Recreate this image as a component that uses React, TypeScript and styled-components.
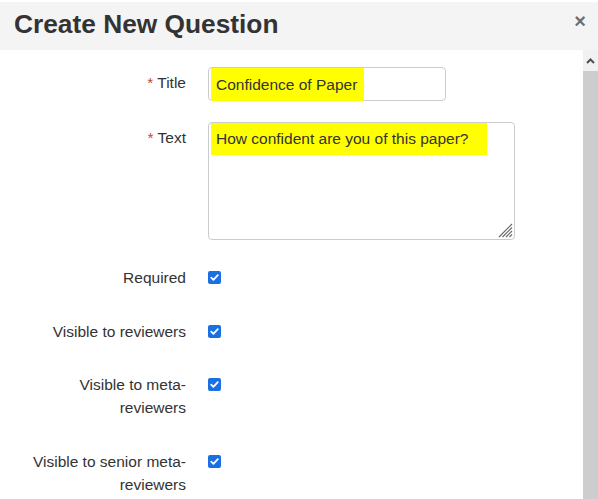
import React from "react";
import styled, { createGlobalStyle } from "styled-components";

const Global = createGlobalStyle`
  html, body { margin: 0; padding: 0; background: #ffffff; }
  body { font-family: "Liberation Sans", Arial, sans-serif; }
`;

const Page = styled.div`
  width: 598px;
  height: 499px;
  display: flex;
  flex-direction: column;
  background: #ffffff;
  padding-top: 2px;
  box-sizing: border-box;
  overflow: hidden;
`;

const Header = styled.div`
  height: 48px;
  flex: none;
  display: flex;
  align-items: center;
  justify-content: space-between;
  background: #f4f4f4;
  padding: 0 12px 0 14px;
  box-sizing: border-box;
`;

const Heading = styled.h1`
  margin: 0;
  font-family: "Liberation Sans", Arial, sans-serif;
  font-weight: bold;
  font-size: 26.3px;
  line-height: 30px;
  color: #333333;
  padding-bottom: 4px;
`;

const Close = styled.span`
  font-family: "Liberation Sans", Arial, sans-serif;
  font-weight: bold;
  font-size: 20px;
  line-height: 20px;
  color: #000;
  opacity: 0.55;
  margin-bottom: 10px;
`;

const BodyWrap = styled.div`
  flex: 1;
  display: flex;
  min-height: 0;
`;

const Content = styled.div`
  flex: 1;
  padding: 17px 0 0 21px;
  display: flex;
  flex-direction: column;
`;

const Row = styled.div<{ $mb: number }>`
  display: flex;
  align-items: flex-start;
  gap: 22px;
  margin-bottom: ${(p) => p.$mb}px;
`;

const Label = styled.div<{ $pt?: number }>`
  width: 165px;
  flex: none;
  text-align: right;
  font-size: 15.5px;
  line-height: 23px;
  color: #333333;
  padding-top: ${(p) => p.$pt ?? 0}px;
`;

const Star = styled.span`
  color: #b94a48;
  margin-right: 4px;
`;

const Field = styled.div<{ $w: number; $h: number }>`
  position: relative;
  width: ${(p) => p.$w}px;
  height: ${(p) => p.$h}px;
  box-sizing: border-box;
  border: 1px solid #cccccc;
  border-radius: 4px;
  background: #ffffff;
  padding: 0 0 0 2px;
`;

const Highlight = styled.div<{ $w: number; $h: number }>`
  width: ${(p) => p.$w}px;
  height: ${(p) => p.$h}px;
  background: #ffff00;
  box-sizing: border-box;
  padding-left: 5px;
  display: flex;
  align-items: center;
  font-size: 15.5px;
  color: #333333;
  white-space: nowrap;
`;

const Grip = styled.svg`
  position: absolute;
  right: 1px;
  bottom: 1px;
`;

const Check = styled.span`
  width: 13px;
  height: 13px;
  margin-top: 5px;
  flex: none;
  border-radius: 2px;
  background: #1a6fe3;
  display: flex;
  align-items: center;
  justify-content: center;
`;

const Scrollbar = styled.div`
  width: 15px;
  flex: none;
  display: flex;
  flex-direction: column;
`;

const ScrollButton = styled.div`
  height: 21px;
  background: #f1f1f1;
  display: flex;
  align-items: center;
  justify-content: center;
`;

const Thumb = styled.div`
  flex: 1;
  background: #cdcdcd;
`;

const CheckMark = () => (
  <Check>
    <svg width="11" height="11" viewBox="0 0 11 11">
      <path d="M2.2 5.6 L4.4 7.8 L8.8 3.2" stroke="#fff" strokeWidth="1.8" fill="none" strokeLinecap="round" strokeLinejoin="round" />
    </svg>
  </Check>
);

const checkRows: { label: string; mb: number }[] = [
  { label: "Required", mb: 31 },
  { label: "Visible to reviewers", mb: 30 },
  { label: "Visible to meta-reviewers", mb: 31 },
  { label: "Visible to senior meta-reviewers", mb: 0 },
];

export default function App() {
  return (
    <>
      <Global />
      <Page>
        <Header>
          <Heading>Create New Question</Heading>
          <Close>×</Close>
        </Header>
        <BodyWrap>
          <Content>
            <Row $mb={21}>
              <Label $pt={4}>
                <Star>*</Star>Title
              </Label>
              <Field $w={238} $h={34}>
                <Highlight $w={153} $h={33}>Confidence of Paper</Highlight>
              </Field>
            </Row>
            <Row $mb={26}>
              <Label $pt={4}>
                <Star>*</Star>Text
              </Label>
              <Field $w={307} $h={118}>
                <Highlight $w={276} $h={32}>How confident are you of this paper?</Highlight>
                <Grip width="17" height="17" viewBox="0 0 17 17">
                  <path d="M16 3 L3 16 M16 6.5 L6.5 16 M16 10 L10 16 M16 13.5 L13.5 16" stroke="#6a6a6a" strokeWidth="1.2" />
                </Grip>
              </Field>
            </Row>
            {checkRows.map((r) => (
              <Row key={r.label} $mb={r.mb}>
                <Label>{r.label}</Label>
                <CheckMark />
              </Row>
            ))}
          </Content>
          <Scrollbar>
            <ScrollButton>
              <svg width="9" height="6" viewBox="0 0 9 6">
                <path d="M1 5 L4.5 1.5 L8 5" stroke="#505050" strokeWidth="2" fill="none" />
              </svg>
            </ScrollButton>
            <Thumb />
          </Scrollbar>
        </BodyWrap>
      </Page>
    </>
  );
}
